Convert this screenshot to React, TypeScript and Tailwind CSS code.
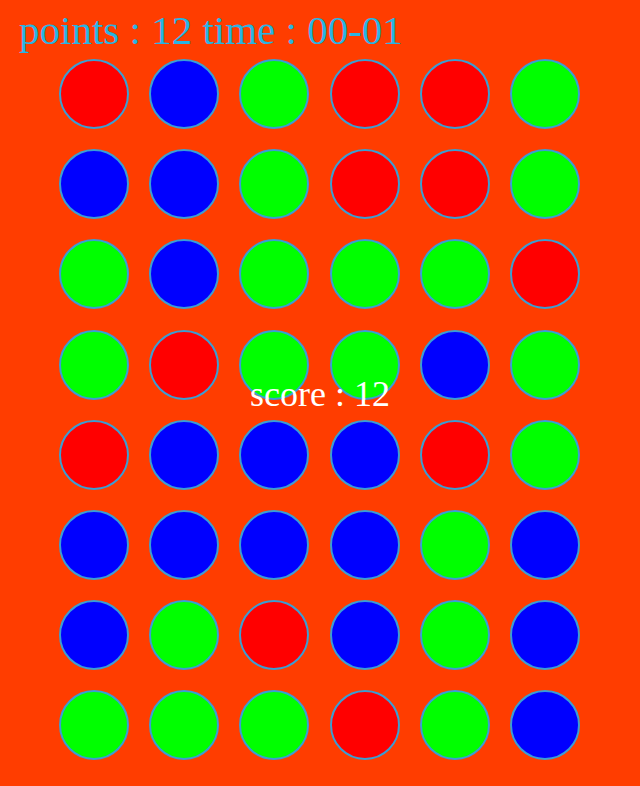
import React from "react";

const rows = [
  "RBGRRG",
  "BBGRRG",
  "GBGGGR",
  "GRGGBG",
  "RBBBRG",
  "BBBBGB",
  "BGRBGB",
  "GGGRGB",
];

const fill: Record<string, string> = {
  R: "bg-[#ff0000]",
  G: "bg-[#00ff00]",
  B: "bg-[#0000ff]",
};

export default function App() {
  return (
    <div
      className="relative w-[640px] h-[786px] bg-[#ff3d00] overflow-hidden"
      style={{ fontFamily: '"Liberation Serif", "Times New Roman", serif' }}
    >
      <div className="pl-[19px] pt-[7px] text-[41px] leading-[46px] text-[#29b4e3] whitespace-nowrap">
        points : 12 time : 00-01
      </div>
      <div className="ml-[59px] mt-[6px] grid grid-cols-[repeat(6,70px)] gap-[20.2px]">
        {rows.flatMap((r, i) =>
          r.split("").map((c, j) => (
            <div
              key={`${i}-${j}`}
              className={`w-[70px] h-[70px] rounded-full border-2 border-[#3a9ed4] ${fill[c]}`}
            />
          ))
        )}
      </div>
      <div className="absolute left-0 right-0 top-[373px] text-center text-[36px] leading-[42px] text-white">
        score : 12
      </div>
    </div>
  );
}
